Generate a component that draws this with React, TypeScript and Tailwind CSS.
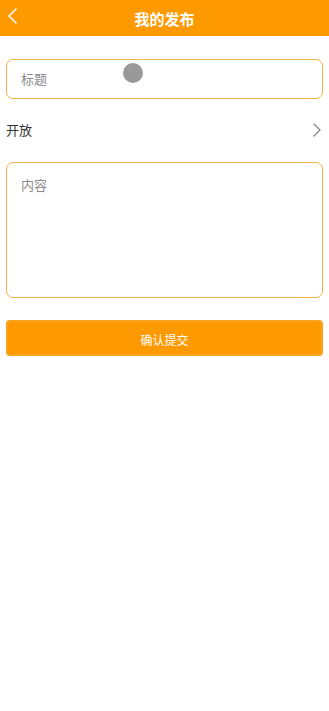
import React from 'react';

const font = { fontFamily: '"Noto Sans CJK SC", "Noto Sans", sans-serif' };

/**
 * Publish form page: title, visibility row, content box and submit button.
 */
export default function App() {
  return (
    <div className="relative min-h-[711px] w-full bg-white" style={font}>
      {/* Header */}
      <div className="relative flex h-[36px] items-center justify-center bg-[#ff9900]">
        <svg
          className="absolute left-[6px] top-[7px]"
          width="14"
          height="18"
          viewBox="0 0 14 18"
          fill="none"
        >
          <path d="M10 2 L3 9 L10 16" stroke="white" strokeWidth="1.6" strokeLinecap="round" strokeLinejoin="round" />
        </svg>
        <span className="text-[15px] font-bold leading-none text-white">我的发布</span>
      </div>

      <div className="px-[6px]">
        {/* Title input */}
        <div className="mt-[23px] flex h-[40px] items-center rounded-[7px] border border-[#f2b344] px-[14px]">
          <span className="text-[13px] text-[#8a8a8a]">标题</span>
        </div>

        {/* Visibility row */}
        <div className="flex h-[63px] items-center justify-between pb-[2px]">
          <span className="text-[13px] text-[#333]">开放</span>
          <svg width="10" height="16" viewBox="0 0 10 16" fill="none" className="mr-[1px]">
            <path d="M2 2 L8 8 L2 14" stroke="#888" strokeWidth="1.4" strokeLinecap="round" strokeLinejoin="round" />
          </svg>
        </div>

        {/* Content textarea */}
        <div className="h-[136px] rounded-[7px] border border-[#f2b344] px-[14px] pt-[8px]">
          <span className="text-[13px] text-[#8a8a8a]">内容</span>
        </div>

        {/* Submit button */}
        <div className="mt-[22px] flex h-[36px] items-center justify-center rounded-[4px] border-2 border-[#f9a21c] bg-[#ff9900] pt-[3px]">
          <span className="text-[12px] text-white">确认提交</span>
        </div>
      </div>

      {/* Touch indicator */}
      <div className="absolute left-[123px] top-[63px] h-[20px] w-[20px] rounded-full bg-[#999]" />
    </div>
  );
}
